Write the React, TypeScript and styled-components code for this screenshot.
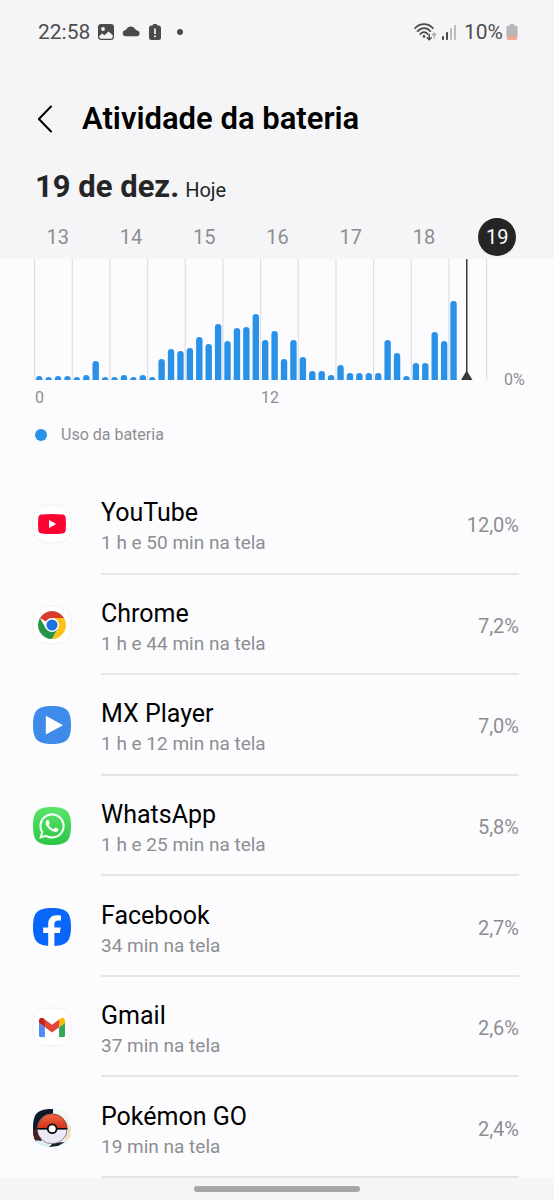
import React, { useState } from "react";
import styled, { createGlobalStyle } from "styled-components";
import { FaWhatsapp } from "react-icons/fa";

const GlobalStyle = createGlobalStyle`
  *, *::before, *::after { box-sizing: border-box; }
  body {
    margin: 0;
    background: #fcfcfe;
    color: #000;
    font-family: Roboto, "Liberation Sans", sans-serif;
  }
  button { font: inherit; color: inherit; background: none; border: 0; padding: 0; cursor: pointer; }
  h1, h2, p, ul { margin: 0; padding: 0; }
  svg { display: block; flex: none; }
`;

const Page = styled.div`
  display: flex;
  flex-direction: column;
  min-height: 100vh;
`;

const TopArea = styled.header`
  background: #f5f5f7;
`;

const StatusBar = styled.div`
  display: flex;
  align-items: center;
  justify-content: space-between;
  height: 64px;
  padding: 0 36px 0 38px;
  color: #4d4d50;
  font-size: 21px;
`;

const StatusGroup = styled.div<{ $gap: number }>`
  display: flex;
  align-items: center;
  gap: ${(p) => p.$gap}px;
`;

const MoreNotices = styled.span`
  padding-left: 8px;
`;

const ChargeLevel = styled.span`
  display: flex;
  align-items: center;
  gap: 3px;
  padding-left: 2px;
`;

const TitleRow = styled.div`
  display: flex;
  align-items: center;
  height: 104px;
  padding: 6px 24px 0 32px;
  gap: 24px;
`;

const BackButton = styled.button`
  display: flex;
  align-items: center;
  justify-content: center;
  width: 26px;
  height: 40px;
`;

const Title = styled.h1`
  font-size: 31px;
  line-height: 40px;
  font-weight: 600;
`;

const DateRow = styled.div`
  display: flex;
  align-items: baseline;
  gap: 6px;
  height: 48px;
  padding: 0 35px;
  line-height: 38px;
  color: #252528;
`;

const DateHeading = styled.h2`
  font-size: 31px;
  font-weight: 700;
`;

const DateNote = styled.span`
  font-size: 20px;
`;

const Days = styled.nav`
  display: flex;
  padding: 2px 20px 3px 21px;
`;

const DayCell = styled.div`
  flex: 1;
  display: flex;
  justify-content: center;
`;

const DayButton = styled.button<{ $active: boolean }>`
  width: 38px;
  height: 38px;
  border-radius: 50%;
  font-size: 20px;
  line-height: 38px;
  background: ${(p) => (p.$active ? "#252528" : "transparent")};
  color: ${(p) => (p.$active ? "#fcfcfe" : "#8e8e92")};
`;

const ChartSection = styled.section`
  display: grid;
  grid-template-columns: 1fr 68px;
  padding-left: 34px;
  color: #8e8e92;
  font-size: 16px;
  line-height: 20px;
`;

const ChartSvg = styled.svg`
  width: 100%;
  height: auto;
`;

const ZeroLabel = styled.span`
  align-self: end;
  padding-left: 18px;
  margin-bottom: -10px;
`;

const HourAxis = styled.div`
  display: grid;
  grid-template-columns: 1fr 1fr;
  padding-top: 8px;
`;

const Hour = styled.span`
  padding-left: 1px;
`;

const Legend = styled.div`
  display: flex;
  align-items: center;
  gap: 14px;
  padding: 17px 35px 0;
  color: #8e8e92;
  font-size: 16px;
  line-height: 20px;
`;

const LegendDot = styled.span`
  width: 12px;
  height: 12px;
  border-radius: 50%;
  background: #2a91e9;
`;

const AppList = styled.ul`
  flex: 1;
  display: grid;
  grid-auto-rows: minmax(96px, 1fr);
  margin-top: 29px;
  list-style: none;
`;

const AppRow = styled.li`
  display: flex;
  padding: 0 35px 0 33px;
  gap: 30px;
  align-items: stretch;
`;

const IconCell = styled.div`
  display: flex;
  align-items: center;
`;

const AppContent = styled.div`
  flex: 1;
  min-width: 0;
  display: flex;
  align-items: center;
  justify-content: space-between;
  border-bottom: 2px solid #e5e5e8;
`;

const AppText = styled.div`
  padding-top: 8px;
`;

const AppName = styled.p`
  font-size: 25px;
  line-height: 32px;
`;

const AppTime = styled.p`
  font-size: 19px;
  line-height: 28px;
  color: #8e8e92;
`;

const AppShare = styled.span`
  padding-top: 4px;
  font-size: 20px;
  color: #8e8e92;
`;

const NavBar = styled.footer`
  display: flex;
  justify-content: center;
  height: 22px;
  padding-top: 8px;
  background: #f5f5f7;
`;

const NavHandle = styled.span`
  width: 30%;
  height: 6px;
  border-radius: 3px;
  background: #a6a6a8;
`;

const PictureIcon = () => (
  <svg width="16" height="16" viewBox="0 0 16 16" aria-hidden="true">
    <rect width="16" height="16" rx="3.2" fill="#4a4a4d" />
    <circle cx="5" cy="5" r="1.9" fill="#f5f5f7" />
    <path d="M1.300 12 4 9.600l2.400 1.600L10.600 7.600l4.100 3.600v1.700a1.800 1.800 0 0 1-1.800 1.800H3.100a1.800 1.800 0 0 1-1.800-1.800z" fill="#f5f5f7" />
  </svg>
);

const CloudIcon = () => (
  <svg width="19" height="16" viewBox="0 0 19 16" aria-hidden="true">
    <path d="M3.300 12.300A3.200 3.200 0 0 1 2.600 6.200C3.300 6 4 5.900 4.300 5.200A5 5 0 0 1 13 4.800c.5.900 1 1.300 2.300 1.700a2.950 2.950 0 0 1-.1 5.800z" fill="#4a4a4d" />
  </svg>
);

const BatteryAlertIcon = () => (
  <svg width="12" height="16" viewBox="0 0 12 16" aria-hidden="true">
    <path d="M3.500 1.500Q3.500 0 5 0h2q1.500 0 1.500 1.500h1A2.500 2.500 0 0 1 12 4v9.500a2.500 2.500 0 0 1-2.500 2.500h-7A2.500 2.500 0 0 1 0 13.500V4a2.500 2.500 0 0 1 2.500-2.500z" fill="#4a4a4d" />
    <path d="M6 4.500v5.500" stroke="#f5f5f7" strokeWidth="1.700" />
    <circle cx="6" cy="12.300" r="1" fill="#f5f5f7" />
  </svg>
);

const DotIcon = () => (
  <svg width="6" height="6" viewBox="0 0 6 6" aria-hidden="true">
    <circle cx="3" cy="3" r="3" fill="#4a4a4d" />
  </svg>
);

const WifiIcon = () => (
  <svg width="23" height="18" viewBox="0 0 23 18" fill="none" strokeLinecap="round" aria-hidden="true">
    <path d="M1 5.200C6-.3 14-.3 19 5.200M3.600 8.200C7.500 4 12.600 4 16.400 8.200M6.300 11C8.500 8.500 11.500 8.500 13.700 11" stroke="#4a4a4d" strokeWidth="1.700" />
    <circle cx="10" cy="13.400" r="1.300" fill="#4a4a4d" />
    <path d="M15.200 11.500v5M13.200 14.700l2 2 2-2" stroke="#4a4a4d" strokeWidth="1.500" />
    <path d="M20.200 15v-4.500M18.400 12l1.800-1.800L22 12" stroke="#adadb0" strokeWidth="1.300" />
  </svg>
);

const SignalIcon = () => (
  <svg width="15" height="16" viewBox="0 0 15 16" aria-hidden="true">
    <rect x="0" y="12" width="2" height="4" rx=".8" fill="#4a4a4d" />
    <rect x="4" y="8" width="2" height="8" rx=".8" fill="#4a4a4d" />
    <rect x="8" y="4" width="2" height="12" rx=".8" fill="#bdbdc0" />
    <rect x="12" y="1" width="2" height="15" rx=".8" fill="#bdbdc0" />
  </svg>
);

const BatteryLowIcon = () => (
  <svg width="12" height="16" viewBox="0 0 12 16" aria-hidden="true">
    <path d="M3.500 1.500Q3.500 0 5 0h2q1.500 0 1.500 1.500h1A2 2 0 0 1 11.500 3.500V12H.5V3.500a2 2 0 0 1 2-2z" fill="#b7b7b9" />
    <path d="M.5 12h11v2a2 2 0 0 1-2 2h-7a2 2 0 0 1-2-2z" fill="#f0a898" />
  </svg>
);

const SQUIRCLE = "M19 0C33.500 0 38 4.500 38 19S33.500 38 19 38 0 33.500 0 19 4.500 0 19 0Z";

const AppIcon = ({ fill, outlined, children }: { fill: string; outlined?: boolean; children: React.ReactNode }) => (
  <svg width="38" height="38" viewBox="0 0 38 38" overflow="visible" aria-hidden="true">
    <path d={SQUIRCLE} fill={fill} stroke={outlined ? "#f1f1f3" : "none"} strokeWidth="1" />
    {children}
  </svg>
);

const YouTubeIcon = () => (
  <AppIcon fill="#fff" outlined>
    <path d="M8.500 9.600Q19 8.400 29.500 9.600 32.500 10 32.700 12.800 33.300 19 32.700 25.200 32.500 28 29.500 28.400 19 29.400 8.500 28.400 5.500 28 5.300 25.200 4.700 19 5.300 12.800 5.500 10 8.500 9.600Z" fill="#fb0633" />
    <path d="m16 15 7.200 4L16 23z" fill="#fff" />
  </AppIcon>
);

const ChromeIcon = () => (
  <AppIcon fill="#fff" outlined>
    <g transform="translate(5 5) scale(.5834)">
      <path d="M24 24 3.220 12A24 24 0 0 1 44.780 12H24z" fill="#da3b2f" />
      <path d="M24 24 13.610 30 3.220 12A24 24 0 0 0 24 48L34.390 30z" fill="#259646" />
      <path d="M24 24 34.390 30 24 48A24 24 0 0 0 44.780 12H24z" fill="#fbc116" />
      <path d="M24 12h12v6z" fill="#fbc116" />
      <circle cx="24" cy="24" r="12" fill="#fff" />
      <circle cx="24" cy="24" r="9.500" fill="#1a73e0" />
    </g>
  </AppIcon>
);

const PlayerIcon = () => (
  <AppIcon fill="#3f8bea">
    <path d="M12.800 9.800v18.800L30 19.200z" fill="#fff" />
  </AppIcon>
);

const WhatsAppIcon = () => (
  <AppIcon fill="url(#whatsapp-green)">
    <defs>
      <linearGradient id="whatsapp-green" x1="0" y1="0" x2="0" y2="1">
        <stop offset="0" stopColor="#5be56a" />
        <stop offset="1" stopColor="#2bc544" />
      </linearGradient>
    </defs>
    <FaWhatsapp x="4.500" y="4.500" size="29" color="#f4fff5" />
  </AppIcon>
);

const FacebookIcon = () => (
  <AppIcon fill="#0866fb">
    <path d="M15.200 38V25h-5v-5.500h5v-3.300c0-5.600 3-9 8.600-9 1.700 0 3.400.2 4.200.4v4.900h-2.700c-2.800 0-3.900 1.300-3.900 3.800v3.200h6.300l-.9 5.500h-5.400v13z" fill="#fff" />
  </AppIcon>
);

const GmailIcon = () => (
  <AppIcon fill="#fff" outlined>
    <svg x="6" y="9.500" width="26" height="20" viewBox="52 42 88 66">
      <path fill="#4f8df5" d="M58 108h14V74L52 59v43c0 3.320 2.690 6 6 6" />
      <path fill="#34a853" d="M120 108h14c3.320 0 6-2.690 6-6V59l-20 15" />
      <path fill="#fbbc04" d="M120 48v26l20-15v-8c0-7.420-8.470-11.650-14.400-7.200" />
      <path fill="#e5463a" d="M72 74V48l24 18 24-18v26L96 92" />
      <path fill="#c5221f" d="M52 51v8l20 15V48l-5.600-4.200c-5.940-4.450-14.400-.22-14.400 7.200" />
    </svg>
  </AppIcon>
);

const PokemonIcon = () => (
  <AppIcon fill="#f3f7f6">
    <defs>
      <clipPath id="pokemon-tile">
        <path d={SQUIRCLE} />
      </clipPath>
      <linearGradient id="pokemon-red" x1="0" y1="0" x2="0" y2="1">
        <stop offset="0" stopColor="#f26a43" />
        <stop offset="1" stopColor="#cf3019" />
      </linearGradient>
    </defs>
    <g clipPath="url(#pokemon-tile)">
      <path d="M0 0h20v8L8 18v15H0z" fill="#0c1a2a" />
      <path d="M0 20h6l3 13-9-2z" fill="#45201f" />
      <path d="M29 8 38 18v9l-6 6z" fill="#eee0c8" />
      <path d="m0 31 9 1 8 4-3 4H0z" fill="#dceef4" />
      <path d="M16 38 20 34l12-1-7 4z" fill="#17222c" />
    </g>
    <circle cx="19.200" cy="19.800" r="15" fill="#e9e9f8" />
    <path d="M4.200 19.800a15 15 0 0 1 30 0z" fill="url(#pokemon-red)" />
    <circle cx="19.200" cy="19.800" r="15" fill="none" stroke="#3c2327" strokeWidth=".5" />
    <path d="M4.200 19.800h30" stroke="#0b0b0f" strokeWidth="1.600" />
    <circle cx="19.200" cy="19.800" r="4.400" fill="#fff" stroke="#0b0b0f" strokeWidth="1.800" />
  </AppIcon>
);

const days = [13, 14, 15, 16, 17, 18, 19];

// Battery use for each half hour of the day, in chart units.
const usage = [
  4, 3, 4, 4, 3, 5, 19, 3, 3, 5, 3, 5, 3, 21, 31, 29, 32, 43, 36, 56, 39, 52, 53, 66, 40, 49, 21, 40, 23, 9, 9,
  5, 15, 7, 7, 7, 7, 40, 27, 4, 17, 17, 48, 39, 79,
];

const SLOT = 452 / 48;
const BASE = 121;

const barPath = (value: number, index: number) => {
  const left = 0.5 + SLOT * (index + 0.5) - 3.2;
  const r = Math.min(3.2, value);
  return `M${left} ${BASE}V${BASE - value + r}a3.200 ${r} 0 0 1 6.400 0V${BASE}z`;
};

const UsageChart = () => (
  <ChartSvg viewBox="0 0 452 121" overflow="visible" role="img" aria-label="Uso da bateria por hora">
    {Array.from({ length: 13 }, (_, i) => (
      <rect key={i} x={(i * 452) / 12} y="0" width="1.200" height={BASE} fill="#dfdfe2" />
    ))}
    {usage.map((value, i) => (
      <path key={i} d={barPath(value, i)} fill="#2a91e9" />
    ))}
    <rect x="432" y="0" width="1.500" height="118" fill="#38383b" />
    <path d="M427 121 432.700 111.500 438.500 121z" fill="#38383b" />
  </ChartSvg>
);

const apps = [
  { name: "YouTube", time: "1 h e 50 min na tela", share: "12,0%", Icon: YouTubeIcon },
  { name: "Chrome", time: "1 h e 44 min na tela", share: "7,2%", Icon: ChromeIcon },
  { name: "MX Player", time: "1 h e 12 min na tela", share: "7,0%", Icon: PlayerIcon },
  { name: "WhatsApp", time: "1 h e 25 min na tela", share: "5,8%", Icon: WhatsAppIcon },
  { name: "Facebook", time: "34 min na tela", share: "2,7%", Icon: FacebookIcon },
  { name: "Gmail", time: "37 min na tela", share: "2,6%", Icon: GmailIcon },
  { name: "Pokémon GO", time: "19 min na tela", share: "2,4%", Icon: PokemonIcon },
];

export default function App() {
  const [day, setDay] = useState(19);
  return (
    <Page>
      <GlobalStyle />
      <TopArea>
        <StatusBar>
          <StatusGroup $gap={8}>
            <span>22:58</span>
            <PictureIcon />
            <CloudIcon />
            <BatteryAlertIcon />
            <MoreNotices>
              <DotIcon />
            </MoreNotices>
          </StatusGroup>
          <StatusGroup $gap={5}>
            <WifiIcon />
            <SignalIcon />
            <ChargeLevel>
              10%
              <BatteryLowIcon />
            </ChargeLevel>
          </StatusGroup>
        </StatusBar>
        <TitleRow>
          <BackButton type="button" aria-label="Voltar">
            <svg width="14" height="28" viewBox="0 0 14 28" fill="none" stroke="#000" strokeWidth="2" strokeLinecap="round" strokeLinejoin="round" aria-hidden="true">
              <path d="M13 1.500.9 14 13 26.500" />
            </svg>
          </BackButton>
          <Title>Atividade da bateria</Title>
        </TitleRow>
        <DateRow>
          <DateHeading>19 de dez.</DateHeading>
          <DateNote>Hoje</DateNote>
        </DateRow>
        <Days aria-label="Dias">
          {days.map((d) => (
            <DayCell key={d}>
              <DayButton type="button" $active={d === day} aria-pressed={d === day} onClick={() => setDay(d)}>
                {d}
              </DayButton>
            </DayCell>
          ))}
        </Days>
      </TopArea>
      <ChartSection>
        <UsageChart />
        <ZeroLabel>0%</ZeroLabel>
        <HourAxis>
          <Hour>0</Hour>
          <Hour>12</Hour>
        </HourAxis>
      </ChartSection>
      <Legend>
        <LegendDot />
        <span>Uso da bateria</span>
      </Legend>
      <AppList>
        {apps.map(({ name, time, share, Icon }) => (
          <AppRow key={name}>
            <IconCell>
              <Icon />
            </IconCell>
            <AppContent>
              <AppText>
                <AppName>{name}</AppName>
                <AppTime>{time}</AppTime>
              </AppText>
              <AppShare>{share}</AppShare>
            </AppContent>
          </AppRow>
        ))}
      </AppList>
      <NavBar>
        <NavHandle />
      </NavBar>
    </Page>
  );
}
